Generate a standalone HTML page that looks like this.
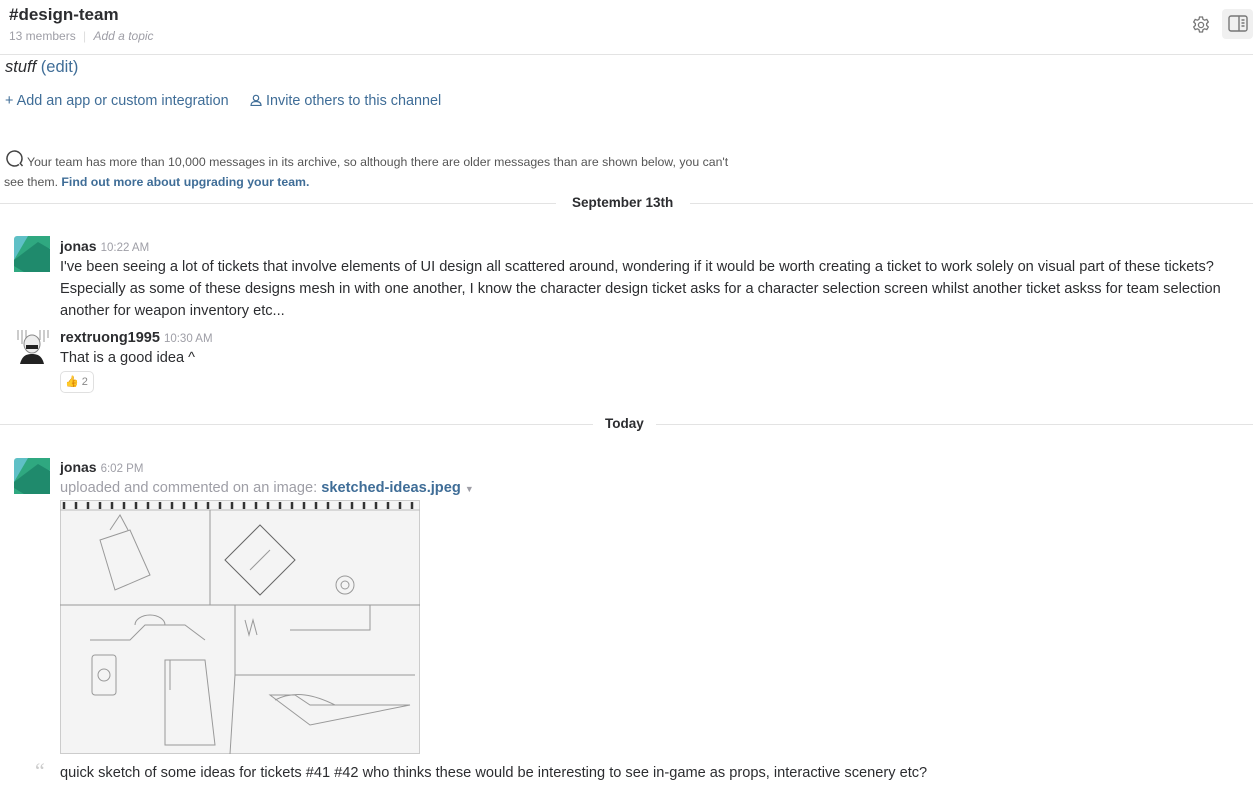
<!DOCTYPE html>
<html><head><style>
*{margin:0;padding:0;box-sizing:border-box}
body{width:1253px;height:796px;overflow:hidden;background:#fff;font-family:"Liberation Sans",sans-serif;color:#2c2d30;position:relative}
.a{position:absolute;white-space:nowrap}
.blue{color:#3f6d97}
.gray{color:#9e9ea6}
.hr{position:absolute;height:1px;background:#e3e3e3}
.name{font-weight:bold;font-size:14px;color:#2c2d30}
.time{font-size:11.5px;color:#9e9ea6;margin-left:4px}
.msg{font-size:14.6px;line-height:22px}
</style></head><body>
<div class="a" style="left:9px;top:5px;font-size:17px;font-weight:bold;color:#2c2d30">#design-team</div>
<div class="a" style="left:9px;top:29px;font-size:12px;color:#9e9ea6">13 members <span style="color:#ddd;margin:0 4px">|</span> <i>Add a topic</i></div>
<svg class="a" style="left:1191px;top:15px" width="20" height="20" viewBox="0 0 20 20" fill="none" stroke="#777" stroke-width="1.3"><path d="M8.5 2h3l.5 2.3 1.6.9 2.2-.8 1.5 2.6-1.7 1.6v1.8l1.7 1.6-1.5 2.6-2.2-.8-1.6.9-.5 2.3h-3l-.5-2.3-1.6-.9-2.2.8-1.5-2.6 1.7-1.6V8.6L2.7 7l1.5-2.6 2.2.8L8 4.3z"/><circle cx="10" cy="10" r="2.6"/></svg>
<div class="a" style="left:1222px;top:9px;width:31px;height:30px;background:#f0f0f0;border-radius:4px"></div>
<svg class="a" style="left:1228px;top:15px" width="20" height="17" viewBox="0 0 20 17" fill="none" stroke="#777" stroke-width="1.4"><rect x="1" y="1" width="18" height="15" rx="2"/><path d="M11 1v15M13.5 5h3M13.5 8h3M13.5 11h3"/></svg>
<div class="hr" style="left:0;top:54px;width:1253px"></div>
<div class="a" style="left:5px;top:58px;font-size:16.5px"><i>stuff</i> <span class="blue">(edit)</span></div>
<div class="a blue" style="left:5px;top:93px;font-size:14.4px">+ Add an app or custom integration</div>
<div class="a blue" style="left:250px;top:93px;font-size:14.4px"><svg width="12" height="12" viewBox="0 0 12 12" fill="none" stroke="#3f6d97" stroke-width="1.2" style="vertical-align:-1px"><circle cx="6" cy="4" r="2.7"/><path d="M1 11.5c0-3 2.2-4 5-4s5 1 5 4z"/></svg> Invite others to this channel</div>
<svg class="a" style="left:5px;top:149px" width="19" height="19" viewBox="0 0 19 19" fill="none" stroke="#444" stroke-width="1.5"><path d="M14 15.5A7.5 7.5 0 1 1 17 9.5c0 2-.7 3.5-1.8 4.8L17.5 17"/></svg>
<div class="a" style="left:27px;top:155px;font-size:12.3px;color:#555">Your team has more than 10,000 messages in its archive, so although there are older messages than are shown below, you can't</div>
<div class="a" style="left:4px;top:175px;font-size:12.3px;color:#555">see them. <b class="blue">Find out more about upgrading your team.</b></div>
<div class="hr" style="left:0;top:203px;width:556px"></div>
<div class="hr" style="left:690px;top:203px;width:563px"></div>
<div class="a" style="left:572px;top:195px;font-size:13.5px;font-weight:bold">September 13th</div>
<svg class="a" style="left:14px;top:236px" width="36" height="36" viewBox="0 0 36 36"><rect width="36" height="36" rx="3" fill="#5fc0c6"/><path d="M14 0h22v12L22 36H0V24z" fill="#2fa880"/><path d="M24 6l12 7v23H10L0 30V24z" fill="#1f8a6c"/></svg>
<div class="a" style="left:60px;top:238px"><span class="name">jonas</span><span class="time">10:22 AM</span></div>
<div class="a msg" style="left:60px;top:256px">I've been seeing a lot of tickets that involve elements of UI design all scattered around, wondering if it would be worth creating a ticket to work solely on visual part of these tickets?<br>Especially as some of these designs mesh in with one another, I know the character design ticket asks for a character selection screen whilst another ticket askss for team selection<br>another for weapon inventory etc...</div>
<svg class="a" style="left:14px;top:328px" width="36" height="36" viewBox="0 0 36 36"><rect width="36" height="36" fill="#fff"/><path d="M4 2v10M8 2v14M12 2v8M26 2v10M30 2v12M34 2v8" stroke="#999"/><ellipse cx="18" cy="16" rx="8" ry="9" fill="#eee" stroke="#888"/><path d="M12 17h12v4H12z" fill="#222"/><path d="M6 36c2-8 6-10 12-10s10 2 12 10z" fill="#222"/></svg>
<div class="a" style="left:60px;top:329px"><span class="name" style="font-size:14.5px">rextruong1995</span><span class="time">10:30 AM</span></div>
<div class="a msg" style="left:60px;top:347px">That is a good idea ^</div>
<div class="a" style="left:60px;top:371px;width:34px;height:22px;border:1px solid #e0e0e0;border-radius:5px;font-size:11px;color:#888;padding:3px 0 0 4px"><span style="color:#f3b43c">👍</span> 2</div>
<div class="hr" style="left:0;top:424px;width:593px"></div>
<div class="hr" style="left:656px;top:424px;width:597px"></div>
<div class="a" style="left:605px;top:416px;font-size:13.5px;font-weight:bold">Today</div>
<svg class="a" style="left:14px;top:458px" width="36" height="36" viewBox="0 0 36 36"><rect width="36" height="36" rx="3" fill="#5fc0c6"/><path d="M14 0h22v12L22 36H0V24z" fill="#2fa880"/><path d="M24 6l12 7v23H10L0 30V24z" fill="#1f8a6c"/></svg>
<div class="a" style="left:60px;top:459px"><span class="name">jonas</span><span class="time">6:02 PM</span></div>
<div class="a msg gray" style="left:60px;top:477px">uploaded and commented on an image: <b class="blue">sketched-ideas.jpeg</b> <span style="font-size:9px">▼</span></div>
<svg class="a" style="left:60px;top:500px" width="360" height="254" viewBox="0 0 360 254" fill="none" stroke="#999" stroke-width="1">
<rect x="0.5" y="0.5" width="359" height="253" fill="#f4f4f4" stroke="#ccc"/>
<path d="M0 10h360" stroke="#bbb"/>
<g stroke="#333" stroke-width="2.5"><path d="M4 2v7M16 2v7M28 2v7M40 2v7M52 2v7M64 2v7M76 2v7M88 2v7M100 2v7M112 2v7M124 2v7M136 2v7M148 2v7M160 2v7M172 2v7M184 2v7M196 2v7M208 2v7M220 2v7M232 2v7M244 2v7M256 2v7M268 2v7M280 2v7M292 2v7M304 2v7M316 2v7M328 2v7M340 2v7M352 2v7"/></g>
<path d="M150 10v95M0 105h360M175 105v70h180M175 175L170 254"/>
<path d="M40 40l30-10 20 45-35 15zM50 30l10-15 8 15"/>
<path d="M165 60l35-35 35 35-35 35z" stroke="#666"/><path d="M190 70l20-20"/>
<circle cx="285" cy="85" r="9"/><circle cx="285" cy="85" r="4"/>
<path d="M30 140h40l15-15h40l20 15M75 125a15 10 0 0 1 30 0"/>
<rect x="32" y="155" width="24" height="40" rx="3"/><circle cx="44" cy="175" r="6"/>
<path d="M105 160h40l10 85h-50zM110 160v30"/>
<path d="M210 195h25l15 10h100l-100 20z"/><path d="M215 200c20-10 40-5 60 5"/>
<path d="M185 120l4 15 4-15 4 15M230 130h80v-25h20"/>
</svg>
<div class="a" style="left:35px;top:760px;font-size:22px;color:#ccc;font-family:'Liberation Serif',serif;line-height:22px">“</div>
<div class="a msg" style="left:60px;top:762px">quick sketch of some ideas for tickets #41 #42 who thinks these would be interesting to see in-game as props, interactive scenery etc?</div>
</body></html>
